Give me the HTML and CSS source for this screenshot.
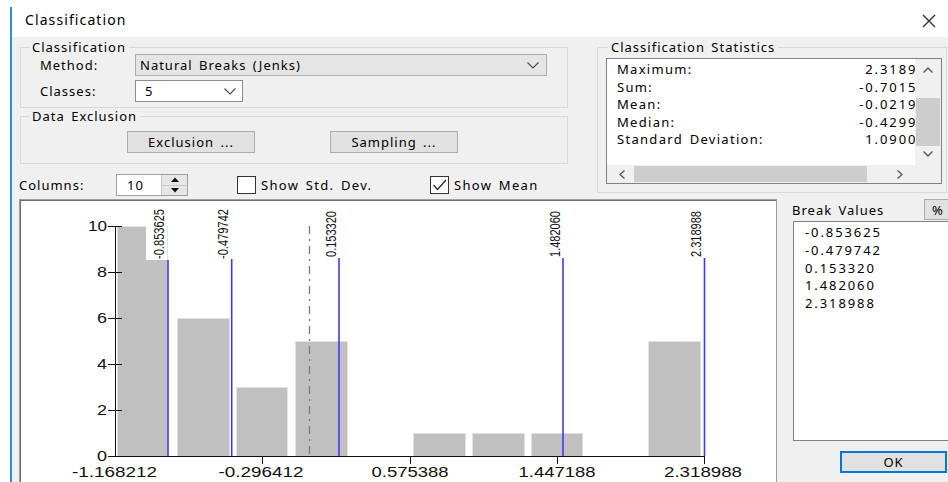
FILE: index.html
```html
<!DOCTYPE html>
<html lang="en">
<head>
<meta charset="utf-8">
<title>Classification</title>
<link rel="stylesheet" href="styles.css">
</head>
<body>
<div class="window">
  <header class="titlebar">
    <span class="title">Classification</span>
    <svg class="close" width="14" height="14" viewBox="0 0 14 14"><path d="M1 1 L13 13 M13 1 L1 13"/></svg>
  </header>
  <main class="client">
    <div class="top">
      <div class="left-col">
        <fieldset class="group group-method">
          <legend>Classification</legend>
          <div class="field-row">
            <span class="field-label">Method:</span>
            <div class="combo combo-method">
              <span>Natural Breaks (Jenks)</span>
              <svg class="chev" width="12" height="7" viewBox="0 0 12 7"><polyline points="0.5,0.5 6,6 11.5,0.5"/></svg>
            </div>
          </div>
          <div class="field-row">
            <span class="field-label">Classes:</span>
            <div class="combo combo-classes">
              <span>5</span>
              <svg class="chev" width="12" height="7" viewBox="0 0 12 7"><polyline points="0.5,0.5 6,6 11.5,0.5"/></svg>
            </div>
          </div>
        </fieldset>
        <fieldset class="group group-excl">
          <legend>Data Exclusion</legend>
          <div class="btn-row">
            <button class="btn">Exclusion ...</button>
            <button class="btn">Sampling ...</button>
          </div>
        </fieldset>
        <div class="columns-row">
          <span class="columns-label">Columns:</span>
          <div class="spin">
            <span class="spin-value">10</span>
            <div class="spin-btns">
              <span class="spin-btn"><svg width="8" height="5" viewBox="0 0 8 5"><polygon points="0,5 4,0.5 8,5"/></svg></span>
              <span class="spin-btn"><svg width="8" height="5" viewBox="0 0 8 5"><polygon points="0,0 8,0 4,4.5"/></svg></span>
            </div>
          </div>
          <label class="check check-std"><span class="box"></span>Show Std. Dev.</label>
          <label class="check"><span class="box"><svg width="17" height="16" viewBox="0 0 17 16"><polyline points="2.5,8 6.5,12.5 15,3"/></svg></span>Show Mean</label>
        </div>
      </div>
      <fieldset class="group stats">
        <legend>Classification Statistics</legend>
        <div class="statlist">
          <div class="stat-rows">
            <div class="stat-row"><span>Maximum:</span><span class="num">2.318988</span></div>
            <div class="stat-row"><span>Sum:</span><span class="num">-0.701523</span></div>
            <div class="stat-row"><span>Mean:</span><span class="num">-0.021923</span></div>
            <div class="stat-row"><span>Median:</span><span class="num">-0.429931</span></div>
            <div class="stat-row"><span>Standard Deviation:</span><span class="num">1.090006</span></div>
          </div>
          <div class="vscroll">
            <span class="arrow-v"><svg width="10" height="6" viewBox="0 0 10 6"><polyline points="0.5,5.5 5,1 9.5,5.5"/></svg></span>
            <span class="vthumb"></span>
            <span class="arrow-v arrow-down"><svg width="10" height="6" viewBox="0 0 10 6"><polyline points="0.5,0.5 5,5 9.5,0.5"/></svg></span>
          </div>
          <div class="hscroll">
            <svg class="arrow-left" width="6" height="9" viewBox="0 0 6 9"><polyline points="5.5,0.5 1,4.5 5.5,8.5"/></svg>
            <span class="hthumb"></span>
            <svg class="arrow-right" width="6" height="9" viewBox="0 0 6 9"><polyline points="0.5,0.5 5,4.5 0.5,8.5"/></svg>
          </div>
          <div class="corner"></div>
        </div>
      </fieldset>
    </div>

    <div class="bottom">
      <div class="chart">
        <svg class="plot" width="756" height="288" viewBox="20 201 756 288">
          <!-- histogram columns -->
          <g class="bars">
            <rect x="117.5" y="227.5" width="50" height="230"/>
            <rect x="177.5" y="319.5" width="52" height="138"/>
            <rect x="236.5" y="388.5" width="51" height="69"/>
            <rect x="295.5" y="342.5" width="52" height="115"/>
            <rect x="413.5" y="434.5" width="52" height="23"/>
            <rect x="472.5" y="434.5" width="52" height="23"/>
            <rect x="531.5" y="434.5" width="51" height="23"/>
            <rect x="648.5" y="342.5" width="52" height="115"/>
          </g>

          <!-- mean marker -->
          <line class="mean" x1="309.5" y1="227" x2="309.5" y2="457"/>

          <!-- class break labels -->
          <g class="break-bg">
            <rect x="146" y="205" width="21" height="56"/>
            <rect x="210" y="205" width="21" height="55"/>
            <rect x="317" y="205" width="21" height="54"/>
            <rect x="541" y="205" width="21" height="54"/>
            <rect x="682" y="205" width="21" height="54"/>
          </g>
          <g class="break-text">
            <text transform="translate(163.5 260) rotate(-90)" textLength="50" lengthAdjust="spacingAndGlyphs">-0.853625</text>
            <text transform="translate(228 260) rotate(-90)" textLength="50" lengthAdjust="spacingAndGlyphs">-0.479742</text>
            <text transform="translate(335.5 258) rotate(-90)" textLength="46" lengthAdjust="spacingAndGlyphs">0.153320</text>
            <text transform="translate(560 258) rotate(-90)" textLength="46" lengthAdjust="spacingAndGlyphs">1.482060</text>
            <text transform="translate(701 258) rotate(-90)" textLength="46" lengthAdjust="spacingAndGlyphs">2.318988</text>
          </g>

          <!-- class break lines -->
          <g class="breaks-lines">
            <line x1="168" y1="261" x2="168" y2="457"/>
            <line x1="231.7" y1="260" x2="231.7" y2="457"/>
            <line x1="339" y1="259" x2="339" y2="457"/>
            <line x1="563" y1="259" x2="563" y2="457"/>
            <line x1="704.5" y1="259" x2="704.5" y2="457"/>
          </g>

          <!-- axes -->
          <path class="axis" d="M115.5 227 V457.5 H705"/>
          <path class="axis" d="M108 227.5 H122 M108 273.5 H122 M108 319.5 H122 M108 365.5 H122 M108 411.5 H122 M108 457.5 H122"/>
          <path class="axis" d="M262.5 457 V465 M410.5 457 V465 M557.5 457 V465 M704.5 457 V465"/>

          <g class="ylabels">
            <text x="107" y="232" textLength="19" lengthAdjust="spacingAndGlyphs">10</text>
            <text x="107" y="278" textLength="10" lengthAdjust="spacingAndGlyphs">8</text>
            <text x="107" y="324" textLength="10" lengthAdjust="spacingAndGlyphs">6</text>
            <text x="107" y="370" textLength="10" lengthAdjust="spacingAndGlyphs">4</text>
            <text x="107" y="416" textLength="10" lengthAdjust="spacingAndGlyphs">2</text>
            <text x="107" y="462" textLength="10" lengthAdjust="spacingAndGlyphs">0</text>
          </g>
          <g class="xlabels">
            <text x="114.5" y="478" textLength="85" lengthAdjust="spacingAndGlyphs">-1.168212</text>
            <text x="261" y="478" textLength="85" lengthAdjust="spacingAndGlyphs">-0.296412</text>
            <text x="410" y="478" textLength="77" lengthAdjust="spacingAndGlyphs">0.575388</text>
            <text x="557" y="478" textLength="77" lengthAdjust="spacingAndGlyphs">1.447188</text>
            <text x="703" y="478" textLength="78" lengthAdjust="spacingAndGlyphs">2.318988</text>
          </g>
        </svg>
      </div>

      <aside class="breaks">
        <div class="breaks-head">
          <span>Break Values</span>
          <button class="btn pct">%</button>
        </div>
        <div class="breaks-list">
          <div>-0.853625</div>
          <div>-0.479742</div>
          <div>0.153320</div>
          <div>1.482060</div>
          <div>2.318988</div>
        </div>
        <button class="btn ok">OK</button>
      </aside>
    </div>
  </main>
</div>
</body>
</html>
```

FILE: styles.css
```css
* { box-sizing: border-box; }

html, body {
  margin: 0;
  padding: 0;
  width: 948px;
  height: 482px;
  overflow: hidden;
  background: #fff;
}

body {
  font-family: "Noto Sans", "Open Sans", sans-serif;
  font-size: 13px;
  letter-spacing: 1px;
  word-spacing: 2px;
  color: #000;
}

/* dialog frame */
.window {
  margin: 7px 0 0 10px;
  width: 944px;
  height: 475px;
  border-left: 2px solid #2f8fe6;
  display: flex;
  flex-direction: column;
}

.titlebar {
  height: 30px;
  flex: none;
  display: flex;
  align-items: flex-start;
  justify-content: space-between;
  background: #fff;
  padding: 4px 0 0 13px;
}

.title {
  font-size: 14px;
  line-height: 18px;
  letter-spacing: 1.1px;
}

.close {
  margin: 3px 18px 0 0;
  fill: none;
  stroke: #2b2b2b;
  stroke-width: 1.3;
}

.client {
  flex: 1;
  background: #f0f0f0;
  padding-left: 8px;
}

.top {
  display: flex;
  align-items: flex-start;
}

.left-col {
  width: 548px;
  flex: none;
}

/* group boxes */
.group {
  margin: 0;
  min-width: 0;
  border: 1px solid #d9d9d9;
}

.group legend {
  padding: 0 3px;
  line-height: 14px;
}

.group-method {
  margin-top: 3px;
  padding: 0 10px 5px 19px;
}

.group-method legend,
.group-excl legend {
  margin-left: -11px;
}

.field-row {
  display: flex;
  align-items: center;
  height: 22px;
}

.field-row + .field-row {
  margin-top: 4px;
}

.field-label {
  width: 95px;
}

.combo {
  height: 22px;
  border: 1px solid #adadad;
  display: flex;
  align-items: center;
  justify-content: space-between;
}

.combo-method {
  width: 412px;
  background: #e5e5e5;
  padding: 0 7px 0 4px;
}

.combo-classes {
  width: 108px;
  background: #fff;
  border-color: #8c8c8c;
  padding: 0 6px 0 9px;
}

.chev {
  fill: none;
  stroke: #4a4a4a;
  stroke-width: 1.1;
}

.group-excl {
  margin-top: 1px;
  padding: 8px 10px 10px 19px;
}

.btn-row {
  display: flex;
  gap: 75px;
  padding-left: 87px;
}

.btn {
  font: inherit;
  letter-spacing: inherit;
  word-spacing: inherit;
  color: #000;
  background: #e1e1e1;
  border: 1px solid #adadad;
  height: 22px;
  padding: 0;
}

.btn-row .btn {
  width: 128px;
}

/* column count and toggles */
.columns-row {
  display: flex;
  align-items: center;
  height: 22px;
  margin: 10px 0 0 -1px;
}

.columns-label {
  width: 97px;
}

.spin {
  width: 72px;
  height: 22px;
  border: 1px solid #a0a0a0;
  background: #fff;
  display: flex;
  justify-content: space-between;
  padding-left: 10px;
  line-height: 20px;
}

.spin-btns {
  width: 26px;
  display: flex;
  flex-direction: column;
  background: #e6e6e6;
  border-left: 1px solid #c8c8c8;
}

.spin-btn {
  flex: 1;
  display: flex;
  align-items: center;
  justify-content: center;
}

.spin-btn + .spin-btn {
  border-top: 1px solid #c8c8c8;
}

.spin-btn svg {
  fill: #111;
}

.check {
  display: flex;
  align-items: center;
  gap: 5px;
  letter-spacing: 1.3px;
}

.check-std {
  margin-left: 49px;
  width: 193px;
}

.box {
  width: 19px;
  height: 18px;
  border: 1px solid #333;
  background: #fff;
  display: flex;
}

.box svg {
  fill: none;
  stroke: #222;
  stroke-width: 1.2;
}

/* statistics list */
.stats {
  margin: 3px 0 0 29px;
  width: 350px;
  padding: 4px 4px 8px 8px;
}

.stats legend {
  margin-left: 2px;
}

.statlist {
  width: 336px;
  height: 126px;
  border: 1px solid #828282;
  background: #fff;
  display: grid;
  grid-template-columns: 308px 26px;
  grid-template-rows: 106px 18px;
}

.stat-rows {
  overflow: hidden;
  padding-top: 2px;
}

.stat-row {
  width: 329px;
  display: flex;
  justify-content: space-between;
  padding-left: 10px;
  line-height: 17.5px;
  letter-spacing: 1.3px;
}

.num {
  letter-spacing: 1.9px;
}

.vscroll {
  background: #f0f0f0;
  display: flex;
  flex-direction: column;
  align-items: center;
}

.arrow-v {
  height: 22px;
  display: flex;
  align-items: center;
}

.arrow-down {
  height: auto;
  flex: 1;
  padding-bottom: 4px;
}

.arrow-v svg,
.hscroll svg {
  fill: none;
  stroke: #555;
  stroke-width: 1.3;
}

.vthumb {
  margin-top: 17px;
  width: 24px;
  height: 48px;
  background: #cdcdcd;
}

.hscroll {
  background: #f0f0f0;
  display: flex;
  align-items: center;
  padding-left: 12px;
}

.hthumb {
  margin-left: 9px;
  width: 233px;
  height: 16px;
  background: #cdcdcd;
}

.arrow-right {
  margin-left: 30px;
}

.corner {
  background: #f0f0f0;
}

/* histogram */
.bottom {
  display: flex;
  margin-top: 3px;
}

.chart {
  flex: none;
  width: 758px;
  height: 290px;
  margin-left: -1px;
  border: 1px solid #a0a0a0;
  box-shadow: inset 1px 1px 0 #6e6e6e;
  background: #fff;
}

.plot {
  display: block;
}

.bars rect {
  fill: #c0c0c0;
  stroke: #e2e2e2;
  stroke-width: 1;
}

.mean {
  stroke: #7d7d7d;
  stroke-width: 1.3;
  stroke-dasharray: 8 5 2 5;
}

.break-bg rect {
  fill: #fff;
}

.break-text text,
.ylabels text,
.xlabels text {
  font-family: "Liberation Sans", Arial, sans-serif;
  letter-spacing: 0;
  word-spacing: 0;
  fill: #111;
}

.break-text text {
  font-size: 14.5px;
}

.breaks-lines line {
  stroke: #3a3af5;
  stroke-width: 1.6;
}

.axis {
  fill: none;
  stroke: #111;
  stroke-width: 1;
}

.ylabels text {
  font-size: 14px;
  text-anchor: end;
}

.xlabels text {
  font-size: 15px;
  text-anchor: middle;
}

/* break values panel */
.breaks {
  flex: 1;
  padding-left: 15px;
}

.breaks-head {
  display: flex;
  justify-content: space-between;
  align-items: center;
  height: 22px;
}

.pct {
  width: 28px;
  height: 21px;
  margin: -1px 6px 0 0;
}

.breaks-list {
  margin-left: 1px;
  width: 165px;
  height: 220px;
  border: 1px solid #828282;
  background: #fff;
  padding: 2px 0 0 11px;
  line-height: 17.75px;
  letter-spacing: 1.9px;
}

.ok {
  display: block;
  margin: 10px 0 0 48px;
  width: 107px;
  height: 22px;
  border: 2px solid #0078d7;
}
```
